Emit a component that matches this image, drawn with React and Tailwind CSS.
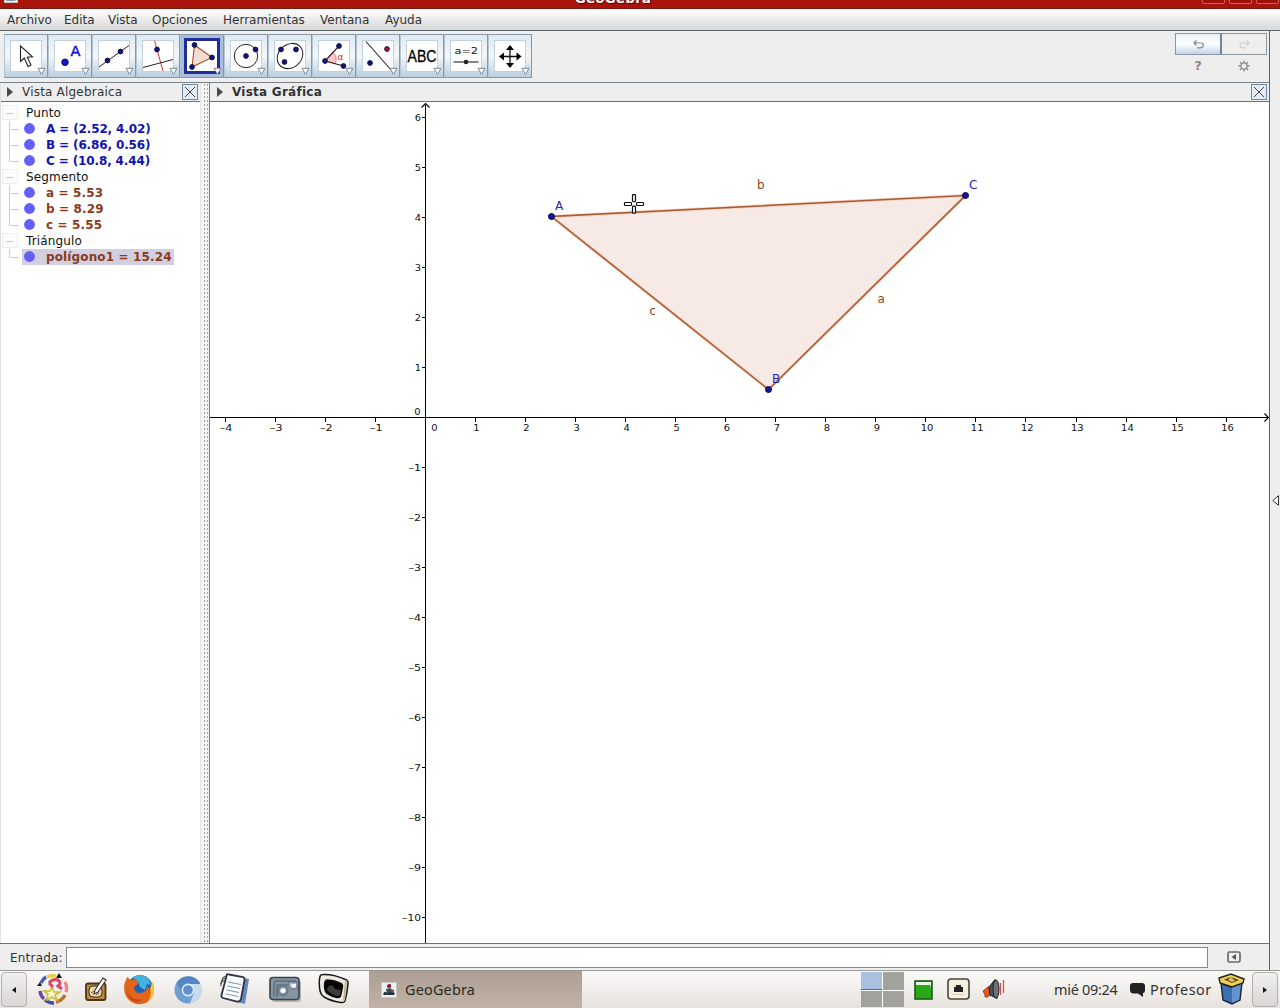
import React from 'react';

const NAVY = '#14147e';
const MENUS = [
  ['Archivo', 'w-[57px]'], ['Edita', 'w-[44px]'], ['Vista', 'w-[44px]'], ['Opciones', 'w-[71px]'],
  ['Herramientas', 'w-[97px]'], ['Ventana', 'w-[65px]'], ['Ayuda', 'w-[50px]'],
];

function Dot({ x, y, r = 2.4, fill = NAVY }) {
  return <circle cx={x} cy={y} r={r} fill={fill} stroke="#080840" strokeWidth="0.9" />;
}

const TOOLS = [
  <path key="t" d="M10.5 6 V21.5 L14.3 18 L18 26.5 L21 25 L17.3 17.2 L22.5 16.8 Z" fill="#fff" stroke="#222" strokeWidth="1.1" />,
  <g key="t">
    <Dot x={11} y={22.3} r={3.3} fill="#1515d8" />
    <text x="16.5" y="16" fontSize="14.5" fontFamily="DejaVu Sans" fill="#1515c8" stroke="#1515c8" strokeWidth="0.5">A</text>
  </g>,
  <g key="t"><path d="M1 27 L31 5.5" stroke="#222" /><Dot x={9.5} y={20.5} /><Dot x={22.5} y={11.5} /></g>,
  <g key="t"><path d="M12.5 0.5 L21 31" stroke="#e03030" /><path d="M1 27.5 L31 19.5" stroke="#222" /><Dot x={15} y={9.5} /></g>,
  <g key="t">
    <path d="M8.5 5 L26 17.5 L6 27 Z" fill="#f5dcd2" stroke="#a84a28" strokeWidth="1.1" />
    <Dot x={8.5} y={5} /><Dot x={26} y={17.5} /><Dot x={6} y={27} />
  </g>,
  <g key="t"><circle cx="16" cy="16" r="11.7" fill="none" stroke="#222" /><Dot x={16} y={16} /><Dot x={25.5} y={9.5} /></g>,
  <g key="t">
    <ellipse cx="16" cy="16" rx="13.8" ry="11.5" transform="rotate(-43 16 16)" fill="none" stroke="#222" />
    <Dot x={7} y={9.5} /><Dot x={22} y={9.5} /><Dot x={10.5} y={22} />
  </g>,
  <g key="t">
    <path d="M7 21 L15.5 12.5 A11.5 11.5 0 0 1 17.5 23.5 Z" fill="#ffc6c6" stroke="#e86060" strokeWidth="0.7" />
    <path d="M21 6 L7 21 L25.5 26" fill="none" stroke="#222" strokeWidth="1.1" />
    <Dot x={21} y={6} /><Dot x={7} y={21} /><Dot x={25.5} y={26} />
    <text x="19.5" y="19.5" fontSize="9" fontFamily="DejaVu Sans" fill="#e02020">α</text>
  </g>,
  <g key="t"><path d="M4 1.5 L30 31" stroke="#222" strokeWidth="1.1" /><Dot x={8} y={23} /><Dot x={25} y={9} fill="#b01828" /></g>,
  <text key="t" x="1.5" y="21.7" fontSize="16" textLength="29" lengthAdjust="spacingAndGlyphs" fontFamily="Liberation Sans" fill="#000" stroke="#000" strokeWidth="0.3">ABC</text>,
  <g key="t">
    <text x="4.5" y="14" fontSize="9.5" textLength="23.5" lengthAdjust="spacingAndGlyphs" fontFamily="DejaVu Sans" fill="#111">a=2</text>
    <path d="M3.5 22 H28.5" stroke="#444" strokeWidth="1.3" /><circle cx="16" cy="22" r="2.3" fill="#222" />
  </g>,
  <g key="t">
    <path d="M16 8 V25 M8 16.5 H25" stroke="#111" strokeWidth="1.3" />
    <path d="M16 5 l4 5 h-8z M16 28 l4-5 h-8z M5 16.5 l5-4 v8z M27.5 16.5 l-5-4 v8z" fill="#000" />
  </g>,
];

function ToolButton({ children, selected }) {
  return (
    <div className={'flex h-[44px] w-[44px] items-center justify-center border border-[#8498a8] border-l-[#b3c4d2] ' +
      (selected ? 'bg-[#a9bedb]' : 'bg-linear-to-b from-[#dfe9f1] via-[#f4f7fa] to-[#b9cfe0]')}>
      <div className={'flex h-[36px] w-[36px] shrink-0 items-center justify-center ' + (selected ? 'bg-[#1f2d94]' : '')}>
        <svg className={selected ? 'h-[30px] w-[30px] bg-white' : 'h-[32px] w-[32px] border border-[#c3d1dc] bg-white'}
          overflow="visible" viewBox="1 1 30 30" fill="none">
          {children}
          <path d="M28 28.3 h7 l-3.5 6z" fill="#fff" stroke="#7c8894" strokeWidth="1" />
        </svg>
      </div>
    </div>
  );
}

function CloseBox() {
  return (
    <svg className="h-[16px] w-[16px] shrink-0" viewBox="0 0 16 16">
      <rect x="0.5" y="0.5" width="15" height="15" fill="#e3ecf4" stroke="#71879a" />
      <path d="M3 3 L13 13 M13 3 L3 13" stroke="#444" strokeWidth="1" />
    </svg>
  );
}

function Expander() {
  return <svg className="h-[10px] w-[6px] shrink-0" viewBox="0 0 6 10"><path d="M0 0 L6 5 L0 10z" fill="#4a4a4a" /></svg>;
}

const BLUE = 'text-[#1212b4] tracking-[-0.13px]';
const BROWN = 'text-[#8a3c1a] tracking-[0.13px]';
const TREE = [
  { name: 'Punto', color: BLUE, items: ['A = (2.52, 4.02)', 'B = (6.86, 0.56)', 'C = (10.8, 4.44)'] },
  { name: 'Segmento', color: BROWN, items: ['a = 5.53', 'b = 8.29', 'c = 5.55'] },
  { name: 'Triángulo', color: BROWN, items: ['polígono1 = 15.24'], selected: true },
];

function Tree() {
  return (
    <div className="pt-[3px] text-[12px] leading-[16px]">
      {TREE.map((g) => (
        <div key={g.name}>
          <div className="flex h-[16px] items-center">
            <svg className="ml-[1px] mr-[8px] h-[16px] w-[16px]" viewBox="0 0 16 16">
              <rect x="0.5" y="0.5" width="15" height="14" fill="#fdfdfd" stroke="#eeeeee" /><path d="M4 8.5 H11" stroke="#c8c8c8" />
            </svg>
            <span className="tracking-[0.15px] text-[#111]">{g.name}</span>
          </div>
          {g.items.map((t, i) => (
            <div key={t} className="flex h-[16px] items-center">
              <svg className="h-[16px] w-[21px] shrink-0" viewBox="1 0 21 16" fill="none" stroke="#d2cccc">
                <path d={i === g.items.length - 1 ? 'M9.5 0 V8.5 H19' : 'M9.5 0 V16 M9.5 8.5 H19'} />
              </svg>
              <div className={'flex h-[16px] items-center pr-[2px] ' + (g.selected ? 'bg-[#d2cfe0]' : '')}>
                <svg className="mr-[11px] ml-[2px] h-[12px] w-[11px]" viewBox="0 0 11 12"><circle cx="5.5" cy="5.5" r="5.4" fill="#625ff5" /></svg>
                <span className={'font-bold whitespace-nowrap ' + g.color}>{t}</span>
              </div>
            </div>
          ))}
        </div>
      ))}
    </div>
  );
}

const X_TICKS = Array.from({ length: 21 }, (_, i) => i - 4).filter((n) => n !== 0);
const Y_TICKS = Array.from({ length: 17 }, (_, i) => i - 10).filter((n) => n !== 0);
const label = (n) => (n < 0 ? '–' + -n : String(n));
const labelWidth = (n) => label(n).length * 6.3;

function AxisLabel({ n, x, y, anchor }) {
  return <text x={x} y={y} textAnchor={anchor} textLength={labelWidth(n)} lengthAdjust="spacingAndGlyphs">{label(n)}</text>;
}

function Graph() {
  return (
    <svg className="block h-[841px] w-[1059px]" viewBox="210 102 1059 841" fontFamily="DejaVu Sans">
      <g stroke="#000" fill="none" shapeRendering="crispEdges">
        <path d="M425.5 105 V943 M210 417.5 H1268" />
        {X_TICKS.map((n) => <path key={n} d={`M${Math.round(425 + n * 50.04) + 0.5} 418 v4`} />)}
        {Y_TICKS.map((n) => <path key={n} d={`M422 ${417.5 - n * 50} h4`} />)}
      </g>
      <path d="M421.5 107.5 L425.5 103.5 L429.5 107.5 M1264.5 413.5 L1268.5 417.5 L1264.5 421.5" fill="none" stroke="#000" strokeWidth="1.2" />
      <g fontSize="9.5" fill="#111">
        {X_TICKS.map((n) => <AxisLabel key={n} n={n} x={426.4 + n * 50.07} y={431} anchor="middle" />)}
        {Y_TICKS.map((n) => <AxisLabel key={n} n={n} x={421} y={421 - n * 50} anchor="end" />)}
        <AxisLabel n={0} x={414.3} y={415} anchor="start" /><AxisLabel n={0} x={431.2} y={431} anchor="start" />
      </g>
      <path d="M551.5 216.5 L768.5 389.5 L965.5 195.5 Z" fill="#f6e9e6" stroke="#f6cdb4" strokeWidth="3" />
      <path d="M551.5 216.5 L768.5 389.5 L965.5 195.5 Z" fill="none" stroke="#a65a35" strokeWidth="1.5" />
      <g fill="#1212a8" stroke="#080840"><circle cx="551.5" cy="216.5" r="3" /><circle cx="768.5" cy="389.5" r="3" /><circle cx="965.5" cy="195.5" r="3" /></g>
      <g fontSize="12" fill="#2424b4"><text x="555" y="210">A</text><text x="772" y="383">B</text><text x="969" y="189">C</text></g>
      <g fontSize="12" fill="#8a4a20"><text x="757" y="189">b</text><text x="649.3" y="315">c</text><text x="877.5" y="303">a</text></g>
      <g fill="#fff" stroke="#111" strokeWidth="1.2">
        <rect x="632.5" y="194.6" width="3" height="7" rx="0.8" /><rect x="632.5" y="206.2" width="3" height="7" rx="0.8" />
        <rect x="624.5" y="202.5" width="7" height="3" rx="0.8" /><rect x="636.5" y="202.5" width="7" height="3" rx="0.8" />
      </g>
    </svg>
  );
}

function JavaIcon({ className }) {
  return (
    <svg className={className} viewBox="0 0 16 16">
      <rect x="0.5" y="0.5" width="15" height="15" fill="#edf1f2" stroke="#c2c9cc" />
      <path d="M8 2 q3 0 2 3 q-2 2-4 0 q0-3 2-3z" fill="#7a1e2c" /><path d="M5 7 L10 6 L11 11 H6z" fill="#39504e" />
      <path d="M2 12 q2-4 4-1 l6-1 q3 1 1 3 H3z" fill="#24363c" /><path d="M10 7 l3 1 v2 h-3z" fill="#b33a45" />
    </svg>
  );
}

const Ico = ({ w, children }) => <svg className={'h-[36px] shrink-0 ' + w} viewBox="0 0 32 36" fill="none">{children}</svg>;

function Launchers() {
  return (
    <>
      <Ico w="ml-[10px] w-[32px]">
        <circle cx="16" cy="17" r="14" stroke="#e9dfe2" strokeWidth="1" />
        <g strokeWidth="3.4">
          <path d="M3 19 A13 13 0 0 0 7 27" stroke="#6f4a96" /><path d="M8 28 A13.5 13.5 0 0 0 17 31" stroke="#3b4dab" />
          <path d="M19 30 A13 13 0 0 0 28 23" stroke="#b9772c" /><path d="M29 20 A13 13 0 0 0 28 10" stroke="#e88" />
          <path d="M4 11 A13 13 0 0 1 9 5" stroke="#425ab6" /><path d="M10 5 A13 13 0 0 1 19 4" stroke="#efcb33" />
        </g>
        <path d="M15 15 L17 20 H23 L18 23 L20 28 L15 25 L10 28 L11 22 L7 19 H13z" fill="#fff7c8" stroke="#c9bd3d" strokeWidth="1.6" />
        <path d="M12 11 q4-5 9-3 q4 3 0 6 l4 3 M12 11 l4 4" stroke="#d84668" strokeWidth="3" />
        <path d="M22 1 l3 5 h-6z M3 10 l2 4 h-5z" fill="#181818" />
      </Ico>
      <Ico w="ml-[11px] w-[32px]">
        <rect x="6" y="11.5" width="19.5" height="16.5" rx="2" fill="#bd8b3e" stroke="#4c3517" strokeWidth="1.8" />
        <rect x="9" y="14" width="13" height="11" rx="4" fill="#ead9ae" stroke="#3c2c18" />
        <path d="M23 6 L26 8 L18 20 L14 22 L15 18z" fill="#fff" stroke="#333" strokeWidth="1.1" /><path d="M11 21 q3-3 4 0 t4 0" stroke="#6f572c" />
      </Ico>
      <Ico w="ml-[11px] w-[32px]">
        <circle cx="17" cy="15.5" r="12.5" fill="#1f62b0" />
        <path d="M9 6 Q16 0 25 6 L28 13 L24 12 L22 18 L17 15 L15 9z" fill="#45b2dd" />
        <path d="M1.5 12 L4 5 L8 8 Q12 7 15 9 L15 12 L11 15 Q11 21 17 21 Q24 21 24 14 Q27 16 26 20 L29.5 10 Q34 24 24 30.5 Q11 36 3.5 25 Q0 19 1.5 12z" fill="#e4641b" />
        <path d="M29.5 10 Q34 24 24 30.5 Q29.5 23 27 17z" fill="#f9c43a" /><path d="M3 18 Q8 30 20 27 Q13 33 6 26z" fill="#c8421a" />
      </Ico>
      <Ico w="ml-[17px] w-[32px]">
        <circle cx="16" cy="18" r="13.5" fill="#6f9fd1" /><path d="M16 12 H28.5 A13.5 13.5 0 0 1 18 31.3 L22 21z" fill="#c9daee" />
        <path d="M4.5 11 A13.5 13.5 0 0 1 28.5 12 H16 L10 20z" fill="#5586c4" /><circle cx="16" cy="18" r="6.4" fill="#e1ecf8" /><circle cx="16" cy="18" r="4.8" fill="#5c8fcb" />
      </Ico>
      <Ico w="ml-[15px] w-[32px]">
        <path d="M14 4 L30 7 L26 32 L6 27z" fill="#6488bd" />
        <path d="M8 2.5 Q8 2 10 2.5 L24 5 Q26 6 25.5 8 L22 27 Q21 30 18 29.5 L4 26 Q2 25 2.5 23z" fill="#fbfbfb" stroke="#2d3642" strokeWidth="1.8" />
        <path d="M9 10 L22 12.5 M8.5 14 L21 16.5 M7.5 18 L20 20.5 M7 22 L19 24.5" stroke="#7795b5" />
        <path d="M8 4 q-5 0-5 5 M6 9 q-5 0-4 5 M7 6 q-5 1-5 6" stroke="#333" />
      </Ico>
      <Ico w="ml-[18px] w-[32px]">
        <rect x="3" y="8" width="29" height="22" rx="3" fill="#b5b3b0" />
        <rect x="1" y="5.5" width="29" height="22" rx="3" fill="#8496a2" stroke="#39444e" strokeWidth="1.6" />
        <path d="M5 24 V11 Q5 9 8 9 H27 M8 25 V13 H19" stroke="#4b5964" /><circle cx="14" cy="18.5" r="5" fill="#78909f" stroke="#5c6c78" />
        <circle cx="14" cy="18.5" r="2.6" fill="#fff" /><path d="M19 10 H28 V17 H23 Q19 15 19 10z" fill="#a7b7c2" stroke="#52616c" strokeWidth="0.8" /><rect x="22.5" y="12" width="4.5" height="3.4" fill="#eef4f8" />
      </Ico>
      <Ico w="ml-[17px] w-[32px]">
        <path d="M5 2.5 Q16 2 28.500 8 Q30.500 9 30 12 Q29 22 27 29 Q26 31 23 30.500 Q14 29.500 6 25 Q3 23 2 19 Q0.500 10 2 4.500 Q2.500 2.500 5 2.500z" fill="#eeebe2" stroke="#171717" strokeWidth="1.5" />
        <path d="M28 8.500 L26 28.500" stroke="#c3b697" strokeWidth="2" />
        <path d="M9 8 Q16 8 22 11 Q25 12 24.500 15 L22.500 24 Q22 26 19 25.500 Q13 24.500 9 21.500 Q6.500 19 6.500 14 Q6.500 8 9 8z" fill="#050505" stroke="#111" strokeWidth="1.4" />
        <path d="M9 18 Q10 12 15 14 Q16 18 23 18 L21.500 24 Q14 24 9 18z" fill="#3c3c3c" />
      </Ico>
    </>
  );
}

function PanelArrow({ left }) {
  return (
    <div className="flex h-[35px] w-[26px] shrink-0 items-center justify-center rounded-[4px] border border-[#b4b1ad] bg-linear-to-b from-[#f1f0ef] to-[#d9d7d5]">
      <svg className="h-[6px] w-[4px]" viewBox="0 0 4 6"><path d={left ? 'M4 0 V6 L0 3z' : 'M0 0 V6 L4 3z'} fill="#111" /></svg>
    </div>
  );
}

function Taskbar() {
  return (
    <footer className="flex h-[38px] items-center border-t border-[#999] bg-linear-to-b from-[#fbfaf9] to-[#e7e2dd] pl-[1px] font-['Noto_Sans'] text-[15px] text-[#333]">
      <PanelArrow left />
      <Launchers />
      <div className="ml-[19px] flex h-[37px] w-[213px] shrink-0 items-center bg-linear-to-b from-[#ad9f93] to-[#c2b2a7] pl-[12px]">
        <JavaIcon className="mr-[8px] h-[16px] w-[16px]" />
        <span className="text-[14.4px] tracking-[0.2px] text-[#2b2724]">GeoGebra</span>
      </div>
      <div className="ml-auto grid h-[35px] w-[43px] shrink-0 grid-cols-2 gap-[1px] bg-white">
        <div className="border-b border-[#48699d] bg-[#a9c0e0]" /><div className="bg-[#a2a29d]" />
        <div className="bg-[#a2a29d]" /><div className="bg-[#a2a29d]" />
      </div>
      <svg className="ml-[10px] h-[20px] w-[19px] shrink-0" viewBox="0 0 19 20"><rect x="1" y="1" width="17" height="18" fill="#2aa918" stroke="#1b5d18" strokeWidth="1.6" /><path d="M2 2 H17 V8 L16 5 H2z" fill="#e9f6e3" /></svg>
      <svg className="mb-[2px] ml-[14px] h-[22px] w-[23px] shrink-0" viewBox="0 0 23 22"><rect x="1" y="1" width="21" height="20" rx="3" fill="#f5f0df" stroke="#48463d" strokeWidth="1.6" /><path d="M7 14 V9 H9 V7 H14 V9 H16 V14z" fill="#222" /><path d="M5 16.5 h13" stroke="#d8d0b8" /></svg>
      <svg className="mb-[2px] ml-[12px] h-[22px] w-[24px] shrink-0" viewBox="0 0 24 22"><path d="M1 13 L6 9 L9 8 V18 L6 17 L6 19 H3 V17z" fill="#e4572b" stroke="#912b16" strokeWidth="0.8" /><path d="M7 9 L13 1.500 Q18 8 15 20.500 L8 17z" fill="#4c5059" stroke="#23252a" /><ellipse cx="14" cy="11" rx="3" ry="9" fill="#6d7078" stroke="#222" /><path d="M18.500 5 v12 M21.500 2 v13" stroke="#c75757" strokeWidth="1.3" /></svg>
      <span className="ml-[48px] w-[64px] shrink-0 text-[14.4px] tracking-[-0.25px] whitespace-nowrap">mié 09:24</span>
      <svg className="ml-[12px] h-[14px] w-[15px] shrink-0" viewBox="0 0 15 14"><path d="M3 0 H12 Q15 0 15 3 V7 Q15 10 13 10 L13 14 L8 10.500 H3 Q0 10 0 7 V3 Q0 0 3 0z" fill="#222" /></svg>
      <span className="ml-[5px] w-[62px] shrink-0 text-[14.4px] tracking-[0.5px] whitespace-nowrap">Profesor</span>
      <svg className="mb-[1px] ml-[6px] h-[32px] w-[27px] shrink-0" viewBox="0 0 27 32">
        <path d="M3 10 L13 14 L24 10 L22 27 L14 31 L5 27z" fill="#3c70b3" stroke="#18243a" strokeWidth="1.4" /><path d="M14 14 L23 10 L21 27 L14 30z" fill="#6493cf" />
        <path d="M1 5 L13 1 L26 6 L25 10 L14 14 L2 10z" fill="#edcf59" stroke="#272116" strokeWidth="1.4" /><path d="M6 6.5 L13 4 L21 7 L14 10z" fill="#5d4a24" /><path d="M10 7 l3-3 4 4-3 1z" fill="#e3c45c" />
      </svg>
      <div className="ml-[7px] pr-[2px]"><PanelArrow /></div>
    </footer>
  );
}

const DOTS = 'bg-[#f4f4f4] bg-[radial-gradient(circle,#a2a2a2_0.6px,transparent_0.9px)] bg-[size:3px_4px]';

export default function App() {
  return (
    <div className="flex h-[1008px] w-[1280px] flex-col overflow-hidden bg-[#eeeeee] font-['DejaVu_Sans'] text-[12px] text-[#333]">
      <header className="flex h-[9px] shrink-0 items-end overflow-hidden border-b border-[#7c1712] bg-[#a9150d] pl-[4px]">
        <JavaIcon className="mb-[4px] h-[16px] w-[14px]" />
        <span className="mb-[3px] ml-[557px] text-[13px] leading-[13px] font-bold tracking-[0.5px] text-white [text-shadow:1px_1px_1px_#500]">GeoGebra</span>
        <div className="mb-[4px] ml-auto flex gap-[4px] pr-[1px]">
          {[0, 1, 2].map((i) => <div key={i} className="h-[12px] w-[23px] rounded-b-[2px] border border-[#cf6258] bg-[#9c120b]" />)}
        </div>
      </header>
      <nav className="flex h-[21px] shrink-0 items-center bg-linear-to-b from-white to-[#d8d8d8] pl-[7px]">
        {MENUS.map(([m, w]) => <span key={m} className={'shrink-0 ' + w}>{m}</span>)}
      </nav>
      <div className="flex h-[940px] shrink-0">
        <main className="flex w-[1270px] flex-col border-t border-r border-[#5d6468]">
          <div className="flex h-[52px] shrink-0 items-start justify-between border-b border-[#7a8085] pt-[3px] pr-[2px] pl-[4px]">
            <div className="flex">{TOOLS.map((t, i) => <ToolButton key={i} selected={i === 4}>{t}</ToolButton>)}</div>
            <div className="w-[92px]">
              <div className="mt-[-1px] flex h-[22px] border border-[#8a98a3]">
                <div className="flex w-[46px] items-center justify-center border-r-2 border-[#71899c] bg-linear-to-b from-[#e8f1f8] via-white to-[#bfd4e5]">
                  <svg className="h-[9px] w-[11px]" viewBox="0 0 11 9" fill="none" stroke="#7e858c" strokeWidth="1.2"><path d="M3.5 0.5 L1 3 L3.5 5.5 M1 3 H8 Q10.3 3 10.3 5 Q10.3 7.8 7 7.8 H4" /></svg>
                </div>
                <div className="flex flex-1 items-center justify-center">
                  <svg className="h-[9px] w-[11px]" viewBox="0 0 11 9" fill="none" stroke="#cfcfcf" strokeWidth="1.2"><path d="M7.5 0.5 L10 3 L7.5 5.5 M10 3 H3 Q1 3 1 5 Q1 7.8 4 7.8 H7" /></svg>
                </div>
              </div>
              <div className="flex h-[22px] items-center text-[#888]">
                <span className="w-[46px] text-center text-[13px] font-bold">?</span>
                <svg className="ml-[17px] h-[12px] w-[12px]" viewBox="0 0 12 12" fill="none" stroke="#888"><circle cx="6" cy="6" r="3.1" strokeWidth="1.2" /><path d="M6 0.5 V3 M6 9 V11.5 M0.5 6 H3 M9 6 H11.5 M2 2 L4 4 M8 8 L10 10 M10 2 L8 4 M4 8 L2 10" strokeWidth="1.3" /></svg>
              </div>
            </div>
          </div>
          <div className="flex h-[861px] shrink-0 border-b border-[#6b7175]">
            <section className="flex w-[201px] shrink-0 flex-col border-r border-l border-[#e2e2e2] bg-white">
              <div className="flex h-[19px] shrink-0 items-center border-b border-[#6b7175] bg-[#eeeeee] pl-[6px]">
                <Expander /><span className="ml-[9px] flex-1 tracking-[0.2px] whitespace-nowrap">Vista Algebraica</span><div className="mr-[2px]"><CloseBox /></div>
              </div>
              <Tree />
            </section>
            <div className="flex w-[8px] shrink-0 bg-[#f4f4f4] pl-[2px]"><div className={'flex-1 ' + DOTS} /></div>
            <section className="flex w-[1060px] shrink-0 flex-col border-l border-[#7a7f84] bg-white">
              <div className="flex h-[19px] shrink-0 items-center border-b border-[#6b7175] bg-[#eeeeee] pl-[7px]">
                <Expander /><span className="ml-[9px] flex-1 font-bold tracking-[0.25px]">Vista Gráfica</span><div className="mr-[2px]"><CloseBox /></div>
              </div>
              <Graph />
            </section>
          </div>
          <div className="flex h-[26px] shrink-0 items-center pl-[10px]">
            <span className="w-[56px] pt-[2px] tracking-[0.2px]">Entrada:</span>
            <div className="mt-[1px] h-[21px] w-[1142px] border border-[#7a8a99] bg-white" />
            <svg className="ml-[19px] h-[12px] w-[14px]" viewBox="0 0 14 12"><rect x="1" y="1" width="12" height="10" rx="1.5" fill="#eee" stroke="#6b6b6b" strokeWidth="1.7" /><path d="M9 3 V9 L4.5 6z" fill="#555" /></svg>
          </div>
        </main>
        <aside className="flex w-[10px] items-center justify-center border-t border-[#5d6468]">
          <svg className="h-[11px] w-[7px]" viewBox="0 0 7 11"><path d="M6.5 0.7 V10.3 L0.8 5.5z" fill="#fff" stroke="#333" /></svg>
        </aside>
      </div>
      <Taskbar />
    </div>
  );
}
